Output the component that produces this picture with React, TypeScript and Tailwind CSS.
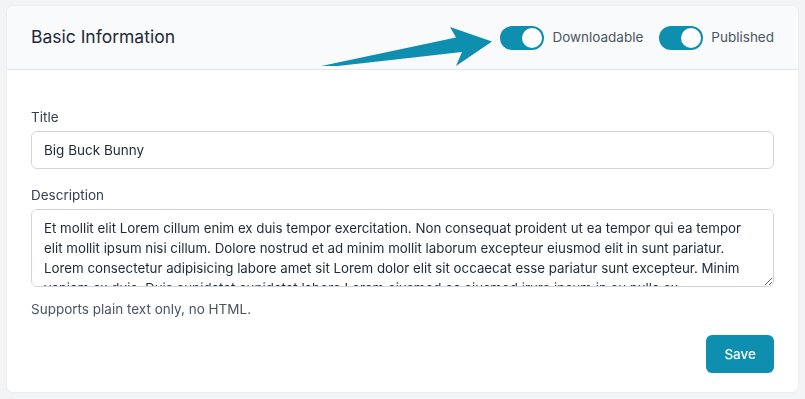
import { useState } from "react";

function Toggle({ label, on }: { label: string; on: boolean }) {
  const [checked, setChecked] = useState(on);
  return (
    <label className="flex items-center gap-2 cursor-pointer">
      <button
        type="button"
        onClick={() => setChecked(!checked)}
        className={`relative h-6 w-11 rounded-full transition-colors ${
          checked ? "bg-[#0e8fb0]" : "bg-gray-300"
        }`}
      >
        <span
          className={`absolute top-[2px] h-5 w-5 rounded-full bg-white transition-all ${
            checked ? "left-[22px]" : "left-[2px]"
          }`}
        />
      </button>
      <span className="text-[13.5px] text-[#4b5563]">{label}</span>
    </label>
  );
}

export default function App() {
  return (
    <div
      className="min-h-screen bg-[#f3f4f6] px-[7px] py-[6px]"
      style={{ fontFamily: "Inter, 'Noto Sans', sans-serif" }}
    >
      <div className="overflow-hidden rounded-md bg-white shadow-[0_1px_2px_rgba(0,0,0,0.06)] ring-1 ring-[#eceef1]">
        {/* Header */}
        <div className="relative flex h-16 items-center justify-between border-b border-[#e5e7eb] bg-[#f9fafb] pl-6 pr-6">
          <h2 className="text-[17.5px] font-normal text-[#1f2937]">Basic Information</h2>
          {/* annotation arrow */}
          <svg
            className="absolute left-[305px] top-[12px]"
            width="186"
            height="48"
            viewBox="312 18 186 48"
          >
            <polygon
              points="319,66.5 456,37.5 450,27 492,41.5 456,66 462,52 320,68"
              fill="#0e8fb0"
            />
          </svg>
          <div className="flex items-center gap-4">
            <Toggle label="Downloadable" on />
            <Toggle label="Published" on />
          </div>
        </div>

        {/* Body */}
        <div className="px-6 pb-[19px] pt-[37px]">
          <label className="mb-1 block text-[13.5px] leading-5 text-[#374151]">Title</label>
          <input
            type="text"
            defaultValue="Big Buck Bunny"
            className="block w-full rounded-md border border-[#d1d5db] bg-white px-3 py-2 text-[13.5px] leading-5 text-[#1f2937] outline-none"
          />

          <label className="mb-1 mt-4 block text-[13.5px] leading-5 text-[#374151]">Description</label>
          <textarea
            rows={3}
            defaultValue="Et mollit elit Lorem cillum enim ex duis tempor exercitation. Non consequat proident ut ea tempor qui ea tempor elit mollit ipsum nisi cillum. Dolore nostrud et ad minim mollit laborum excepteur eiusmod elit in sunt pariatur. Lorem consectetur adipisicing labore amet sit Lorem dolor elit sit occaecat esse pariatur sunt excepteur. Minim veniam ex duis. Duis cupidatat cupidatat labore Lorem eiusmod ea eiusmod irure ipsum in eu nulla ex."
            className="block w-full rounded-md border border-[#d1d5db] bg-white px-3 py-2 text-[13.3px] leading-5 text-[#1f2937] outline-none"
          />
          <p className="mt-3 text-[13.5px] leading-5 text-[#4b5563]">Supports plain text only, no HTML.</p>

          <div className="mt-4 flex justify-end">
            <button
              type="button"
              className="h-[38px] rounded-md bg-[#0e8fb0] px-[18px] text-[13.5px] font-medium text-white"
            >
              Save
            </button>
          </div>
        </div>
      </div>
    </div>
  );
}
